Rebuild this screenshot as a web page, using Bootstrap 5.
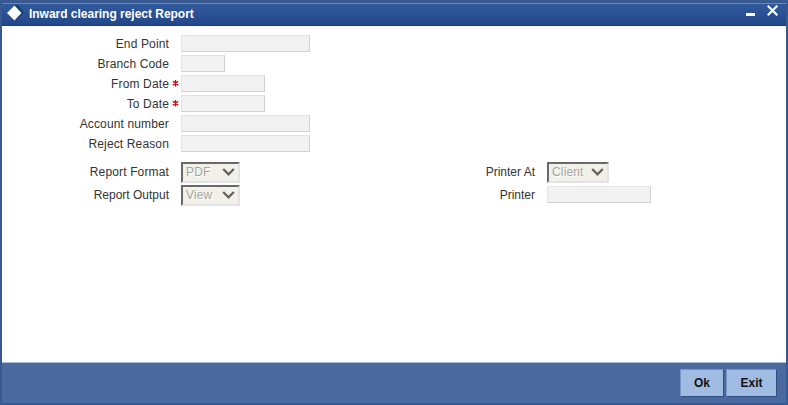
<!DOCTYPE html>
<html lang="en">
<head>
<meta charset="utf-8">
<meta name="viewport" content="width=device-width, initial-scale=1">
<title>Inward clearing reject Report</title>
<link href="https://cdn.jsdelivr.net/npm/bootstrap@5.3.0/dist/css/bootstrap.min.css" rel="stylesheet">
<style>
body{font-family:"Liberation Sans",Arial,sans-serif;font-size:12px;line-height:16px;color:#333;background:#fff}
.window-frame{height:405px;border:2px solid #38598f;border-top-width:3px}
.title-strip{height:23px;flex:none;background:linear-gradient(#30599c,#23488a);border-top:1px solid #6288bd;border-bottom:1px solid #1c3c73;padding:0 7px 0 4px;color:#fff}
.title-strip h1{font-size:12px;line-height:16px;margin:2px 0 0 2px;letter-spacing:-.02px}
.icon-button{padding:0;border:0;background:none;line-height:0}
.form-area{padding-top:9px}
.form-line{height:20px}
.form-line.tall{height:23px}
.field-label{width:167px;text-align:right;white-space:nowrap;line-height:18px;letter-spacing:.14px}
.label-low{line-height:20px}
.label-tight{letter-spacing:0}
.marker{width:12px;height:18px;padding-left:3px;line-height:0;flex:none}
.field-box.form-control{height:17px;min-height:0;padding:0 3px;border:1px solid;border-color:#e4e4e4 #d2d2d2 #d2d2d2 #e4e4e4;border-radius:0;background:#f2f2f2;font-size:12px}
.w-long{width:129px}.w-code{width:44px}.w-date{width:84px}.w-printer{width:104px;margin-top:1px}
.choice{height:21px;width:59px;padding:0 3px 0 3px;border:2px solid;border-color:#696969 #e3e3e3 #e3e3e3 #696969;border-radius:0;background:#f1f0e9;color:#a5a5a0;text-shadow:1px 1px #fff;font-size:12px;line-height:17px;letter-spacing:.15px}
.choice.client{width:62px}
.half-left{width:366px}
.lower-group{padding-top:7px}
.action-strip{height:41px;flex:none;background:#4a699f;border-top:1px solid #a9b9d3;padding:6px 9px 0 0;gap:2px}
.btn.action{height:28px;padding:0;border:1px solid;border-color:#7795c5 #304e80 #304e80 #7795c5;border-radius:0;background:#a0bce2;color:#111;font-size:12px;font-weight:700;line-height:25px}
.w-ok{width:44px}.w-exit{width:51px}
</style>
<script src="https://cdn.jsdelivr.net/npm/bootstrap@5.3.0/dist/js/bootstrap.bundle.min.js"></script>
</head>
<body>
<main class="window-frame d-flex flex-column overflow-hidden">
  <header class="title-strip d-flex align-items-start">
    <svg width="21" height="20" viewBox="0 0 21 20" aria-hidden="true"><path d="M8.500 1h3.500l6 7.500-7.500 7.500H8.500z" fill="#0b3f72"/><path d="M8.500 1.500l7 7.500-7 7.500L1 9z" fill="#fff"/></svg>
    <h1 class="fw-bold">Inward clearing reject Report</h1>
    <div class="ms-auto d-flex">
      <button class="icon-button" type="button" aria-label="Minimize"><svg width="21" height="18"><path d="M0 9h9v3H0z" fill="#fff"/></svg></button>
      <button class="icon-button" type="button" aria-label="Close"><svg width="12" height="18"><path d="M.7 1.700l9.600 9.600M10.300 1.700l-9.600 9.600" stroke="#fff" stroke-width="2.200" fill="none"/></svg></button>
    </div>
  </header>
  <form class="form-area flex-grow-1">
    <div class="form-line d-flex"><label class="field-label" for="ep">End Point</label><span class="marker"></span><input id="ep" class="field-box form-control w-long" disabled></div>
    <div class="form-line d-flex"><label class="field-label" for="bc">Branch Code</label><span class="marker"></span><input id="bc" class="field-box form-control w-code" disabled></div>
    <div class="form-line d-flex"><label class="field-label" for="fd">From Date</label><span class="marker"><svg width="7" height="18"><path d="M3.500 5v6.500M.8 6.300l5.400 4M6.200 6.300l-5.400 4" stroke="#c00d14" stroke-width="1.400"/></svg></span><input id="fd" class="field-box form-control w-date" disabled></div>
    <div class="form-line d-flex"><label class="field-label" for="td">To Date</label><span class="marker"><svg width="7" height="18"><path d="M3.500 5v6.500M.8 6.300l5.400 4M6.200 6.300l-5.400 4" stroke="#c00d14" stroke-width="1.400"/></svg></span><input id="td" class="field-box form-control w-date" disabled></div>
    <div class="form-line d-flex"><label class="field-label" for="an">Account number</label><span class="marker"></span><input id="an" class="field-box form-control w-long" disabled></div>
    <div class="form-line d-flex"><label class="field-label" for="rr">Reject Reason</label><span class="marker"></span><input id="rr" class="field-box form-control w-long" disabled></div>
    <div class="lower-group d-flex">
      <div class="half-left">
        <div class="form-line tall d-flex"><span class="field-label label-low">Report Format</span><span class="marker"></span><button type="button" disabled class="choice d-flex align-items-center justify-content-between">PDF <svg width="13" height="9"><path d="M1.200 1l5.300 5.300L11.800 1" stroke="#64645f" stroke-width="2.300" fill="none"/></svg></button></div>
        <div class="form-line tall d-flex"><span class="field-label label-low label-tight">Report Output</span><span class="marker"></span><button type="button" disabled class="choice d-flex align-items-center justify-content-between">View <svg width="13" height="9"><path d="M1.200 1l5.300 5.300L11.800 1" stroke="#64645f" stroke-width="2.300" fill="none"/></svg></button></div>
      </div>
      <div>
        <div class="form-line tall d-flex"><span class="field-label label-low label-tight">Printer At</span><span class="marker"></span><button type="button" disabled class="choice client d-flex align-items-center justify-content-between">Client <svg width="13" height="9"><path d="M1.200 1l5.300 5.300L11.800 1" stroke="#64645f" stroke-width="2.300" fill="none"/></svg></button></div>
        <div class="form-line tall d-flex"><label class="field-label label-low label-tight" for="pr">Printer</label><span class="marker"></span><input id="pr" class="field-box form-control w-printer" disabled></div>
      </div>
    </div>
  </form>
  <footer class="action-strip d-flex justify-content-end">
    <button type="button" class="btn action w-ok">Ok</button>
    <button type="button" class="btn action w-exit">Exit</button>
  </footer>
</main>
</body>
</html>
